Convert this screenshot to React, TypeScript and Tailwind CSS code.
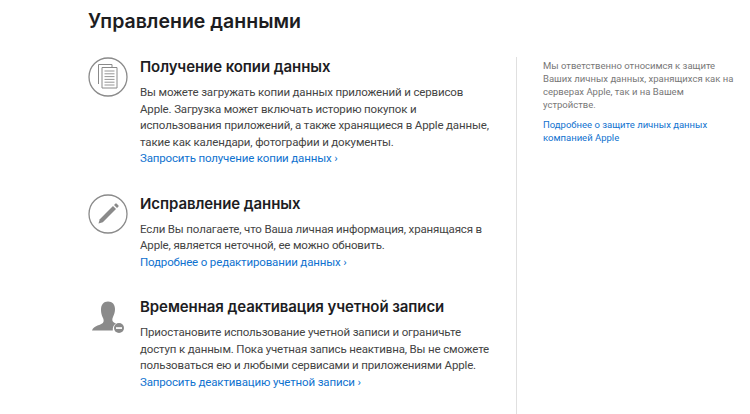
const font = { fontFamily: 'Inter, "Noto Sans", sans-serif' };
const bodyFont = { fontFamily: 'Roboto, "Noto Sans", sans-serif' };

const CopyIcon = () => (
  <svg width="40" height="40" viewBox="0 0 40 40" fill="none" stroke="#8a8a8a">
    <circle cx="20" cy="20" r="19" strokeWidth="1.3" />
    <path d="M10.500 27V7.500h13.500v3" strokeWidth="1" />
    <path d="M14 31V10.500h15V31z" fill="#fff" strokeWidth="1" />
    <path d="M16.500 14h10M16.500 16.800h10M16.500 19.600h10M16.500 22.400h10M16.500 25.200h10M16.500 28h10" strokeWidth="0.9" />
  </svg>
);

const PencilIcon = () => (
  <svg width="40" height="40" viewBox="0 0 40 40" fill="none" stroke="#8a8a8a">
    <circle cx="20" cy="20" r="19" strokeWidth="1.3" />
    <path d="M10.500 29.500l1.300-4.300L25 12l3 3-13.200 13.200z" fill="#8a8a8a" stroke="none" />
    <path d="M26 11l1.300-1.300a1 1 0 0 1 1.400 0l1.600 1.600a1 1 0 0 1 0 1.400L29 14z" fill="#8a8a8a" stroke="none" />
  </svg>
);

const UserIcon = () => (
  <svg width="40" height="40" viewBox="0 0 40 40">
    <path
      d="M20 4.500c4.500 0 7 3 7 7.500 0 3-.8 5.500-2 8-.8 1.600-1 3.500 0 4.700.7.800 1.700 1.300 3 1.700-2.300 1.300-3.500 3.500-3.200 7.100H4c.8-2.600 2.800-3.900 5.500-5 3.600-1.200 5.500-2.100 6-3.800.4-1.400 0-3-1-4.700-1-2.200-1.500-4.500-1.500-7 0-5.500 2.500-8.500 7-8.500z"
      fill="#8a8a8a"
    />
    <circle cx="31" cy="31" r="5" fill="#8a8a8a" />
    <rect x="28" y="30.200" width="6" height="1.700" fill="#fff" />
  </svg>
);

type SectionProps = {
  icon: React.ReactNode;
  title: string;
  lines: string[];
  link: string;
  className: string;
};

const Section = ({ icon, title, lines, link, className }: SectionProps) => (
  <section className={`flex gap-[13px] ${className}`}>
    <div className="w-10 shrink-0">{icon}</div>
    <div className="min-w-0 -ml-px">
      <h2 className="text-[15px] leading-5 font-semibold tracking-[-0.08px] whitespace-nowrap text-[#1d1d1f]">{title}</h2>
      <div className="mt-[7px] text-[11.500px] leading-[16.500px] tracking-[-0.15px] text-[#444]" style={bodyFont}>
        {lines.map((line) => (
          <p key={line} className="whitespace-nowrap">{line}</p>
        ))}
        <a className="block whitespace-nowrap text-[#0f72cf]">{link} ›</a>
      </div>
    </div>
  </section>
);

export default function App() {
  return (
    <div className="flex h-[414px] w-[750px] overflow-hidden bg-white pl-[88px]" style={font}>
      <main className="w-[428px] shrink-0">
        <h1 className="mt-[8px] text-[19.500px] leading-[26px] font-semibold whitespace-nowrap text-[#1d1d1f]">
          Управление данными
        </h1>
        <Section
          className="mt-[23px]"
          icon={<CopyIcon />}
          title="Получение копии данных"
          lines={[
            'Вы можете загружать копии данных приложений и сервисов',
            'Apple. Загрузка может включать историю покупок и',
            'использования приложений, а также хранящиеся в Apple данные,',
            'такие как календари, фотографии и документы.',
          ]}
          link="Запросить получение копии данных"
        />
        <Section
          className="mt-[27px]"
          icon={<PencilIcon />}
          title="Исправление данных"
          lines={[
            'Если Вы полагаете, что Ваша личная информация, хранящаяся в',
            'Apple, является неточной, ее можно обновить.',
          ]}
          link="Подробнее о редактировании данных"
        />
        <Section
          className="mt-[27px]"
          icon={<UserIcon />}
          title="Временная деактивация учетной записи"
          lines={[
            'Приостановите использование учетной записи и ограничьте',
            'доступ к данным. Пока учетная запись неактивна, Вы не сможете',
            'пользоваться ею и любыми сервисами и приложениями Apple.',
          ]}
          link="Запросить деактивацию учетной записи"
        />
      </main>
      <aside className="mt-[57px] w-[234px] border-l border-[#e0e0e0] pl-[26px] pt-[2px] text-[9.500px] leading-[13px]" style={bodyFont}>
        <p className="text-[#777]">
          Мы ответственно относимся к защите
          <br />
          Ваших личных данных, хранящихся как на
          <br />
          серверах Apple, так и на Вашем
          <br />
          устройстве.
        </p>
        <a className="mt-[7px] block text-[#0f72cf]">
          Подробнее о защите личных данных
          <br />
          компанией Apple
        </a>
      </aside>
    </div>
  );
}
